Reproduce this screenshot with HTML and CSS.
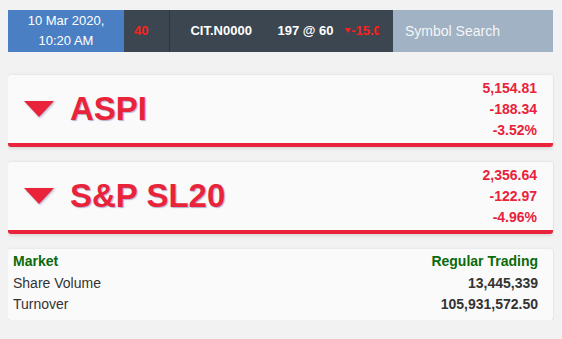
FILE: index.html
```html
<!DOCTYPE html>
<html lang="en">
<head>
  <meta charset="UTF-8">
  <meta name="viewport" content="width=device-width, initial-scale=1.0">
  <title>Market Summary</title>
  <link rel="stylesheet" href="styles.css">
</head>
<body>
  <div class="page">
    <div class="topbar">
      <div class="date">10 Mar 2020,<br>10:20 AM</div>
      <div class="ticker">
        <div class="ticker-track">
          <span class="tick tick-tail"><span class="down">40</span></span>
          <span class="tick">
            <span class="sym">CIT.N0000</span>
            <span class="trade">197 @ 60</span>
            <span class="down arrow">-15.00</span>
          </span>
        </div>
      </div>
      <div class="search">Symbol Search</div>
    </div>

    <div class="index-card">
      <div class="index-name"><span class="tri"></span>ASPI</div>
      <div class="index-vals">
        <div>5,154.81</div>
        <div>-188.34</div>
        <div>-3.52%</div>
      </div>
    </div>

    <div class="index-card">
      <div class="index-name"><span class="tri"></span>S&amp;P SL20</div>
      <div class="index-vals">
        <div>2,356.64</div>
        <div>-122.97</div>
        <div>-4.96%</div>
      </div>
    </div>

    <div class="summary">
      <div class="row head"><span>Market</span><span>Regular Trading</span></div>
      <div class="row"><span>Share Volume</span><b>13,445,339</b></div>
      <div class="row"><span>Turnover</span><b>105,931,572.50</b></div>
    </div>
  </div>
</body>
</html>
```

FILE: styles.css
```css
body { margin: 10px 8px 8px 8px; background: #f2f2f2; font-family: "Liberation Sans", Arial, sans-serif; color: #333; }
.page { width: 545px; }

.topbar { display: flex; height: 42px; }
.date { width: 116px; background: #4a80c3; color: #fff; font-size: 13px; line-height: 20px; text-align: center; display: flex; align-items: center; justify-content: center; }
.ticker { width: 269px; background: #3c4650; }
.ticker-track { width: 255px; height: 42px; overflow: hidden; display: flex; white-space: nowrap; font-size: 13px; font-weight: bold; line-height: 42px; color: #fff; }
.tick { padding: 0 0 0 20px; }
.tick-tail { padding: 0 21px 0 10px; border-right: 1px solid #2c343c; }
.down { color: #ff1f1f; }
.trade { margin-left: 22px; }
.arrow { margin-left: 8px; }
.arrow::before { content: ""; display: inline-block; border-left: 3.5px solid transparent; border-right: 3.5px solid transparent; border-top: 5px solid #ff1f1f; vertical-align: 2px; margin-right: 0; }
.search { flex: 1; background: #a0b2c3; color: #f4f6f8; font-size: 14px; display: flex; align-items: center; padding-left: 12px; }

.index-card { margin-top: 15px; height: 68px; display: flex; align-items: center; justify-content: space-between; padding: 0 16px; background: #fafafa; border-bottom: 4px solid #e8233a; border-radius: 3px; box-shadow: 0 1px 4px rgba(0,0,0,0.15); }
.topbar + .index-card { margin-top: 23px; }
.index-name { display: flex; align-items: center; font-size: 33px; font-weight: bold; color: #e8233a; text-shadow: 1px 1px 1px rgba(70,60,140,0.4); }
.tri { width: 0; height: 0; border-left: 15px solid transparent; border-right: 15px solid transparent; border-top: 16px solid #e8233a; margin-right: 16px; filter: drop-shadow(1px 1px 1px rgba(70,60,140,0.4)); }
.index-vals { text-align: right; font-size: 14px; font-weight: bold; line-height: 21px; color: #e8233a; }

.summary { margin-top: 15px; padding: 2px 15px 4px 5px; background: #fafafa; border-radius: 3px; box-shadow: 0 1px 4px rgba(0,0,0,0.12); font-size: 14px; line-height: 21.5px; }
.row { display: flex; justify-content: space-between; }
.row.head { font-weight: bold; color: #0a6a0a; }
.row b { color: #333; }
```
